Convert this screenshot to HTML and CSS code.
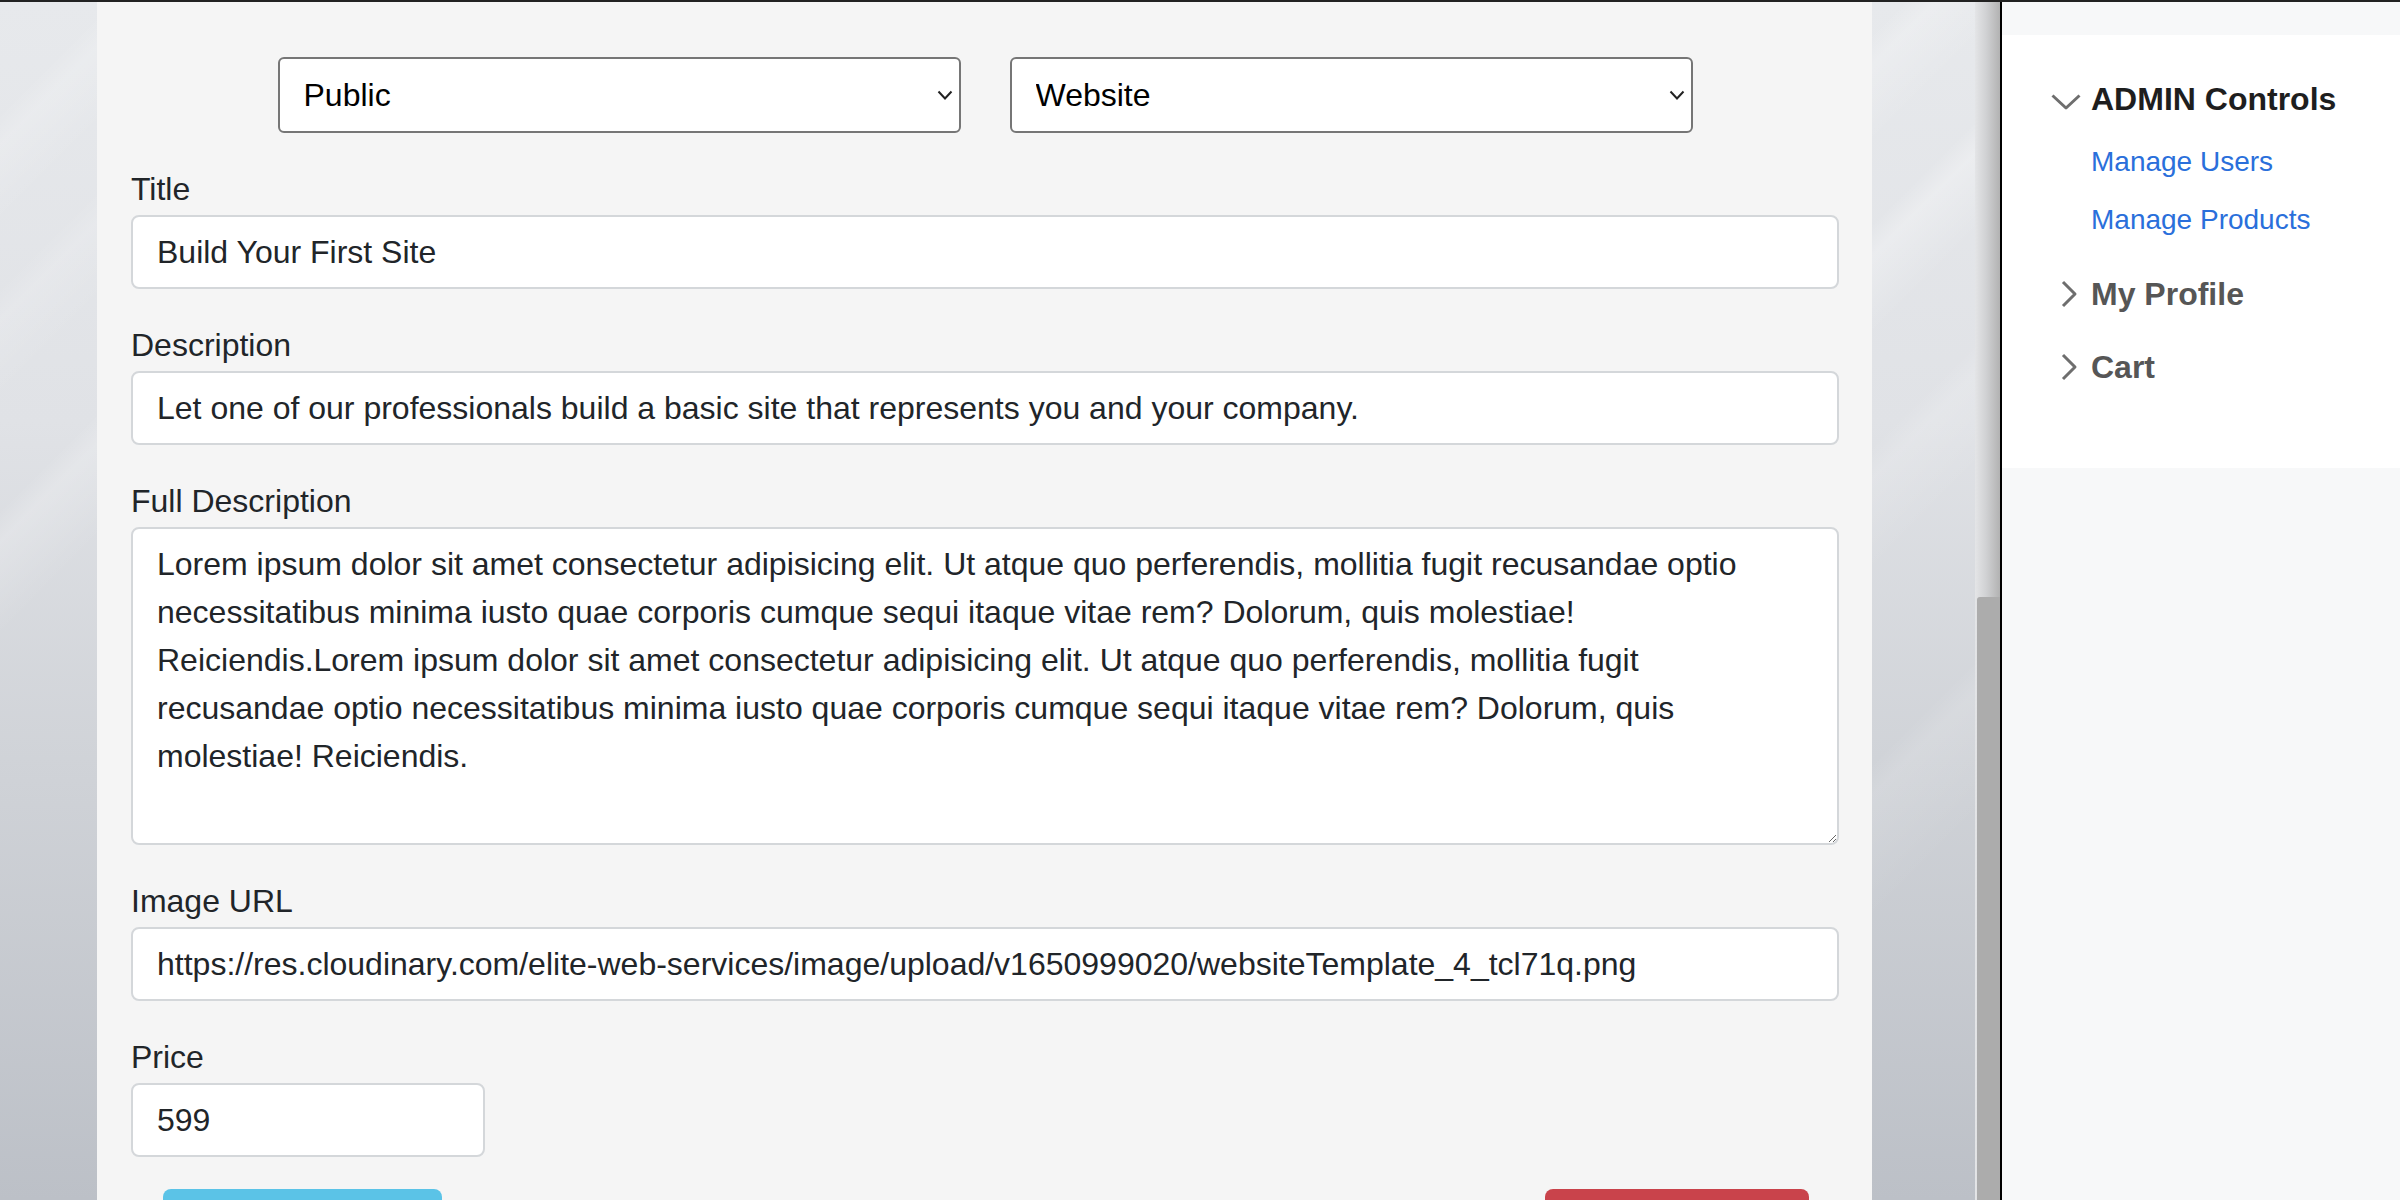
FILE: index.html
```html
<!DOCTYPE html>
<html lang="en">
<head>
<meta charset="utf-8">
<title>Edit Product</title>
<link rel="stylesheet" href="styles.css">
</head>
<body>
<div class="app">
  <main class="stage">
    <section class="panel">
      <form class="product-form">
        <div class="select-row">
          <div class="select-wrap">
            <select class="select">
              <option>Public</option>
              <option>Private</option>
            </select>
            <svg class="select-chevron" viewBox="0 0 16 10"><path d="M1.5 1.5 L8 8.5 L14.5 1.5" fill="none" stroke="#222" stroke-width="2"/></svg>
          </div>
          <div class="select-wrap">
            <select class="select">
              <option>Website</option>
              <option>Hosting</option>
            </select>
            <svg class="select-chevron" viewBox="0 0 16 10"><path d="M1.5 1.5 L8 8.5 L14.5 1.5" fill="none" stroke="#222" stroke-width="2"/></svg>
          </div>
        </div>

        <div class="field">
          <label class="field-label" for="title">Title</label>
          <input class="form-control" id="title" type="text" value="Build Your First Site">
        </div>

        <div class="field">
          <label class="field-label" for="desc">Description</label>
          <input class="form-control" id="desc" type="text" value="Let one of our professionals build a basic site that represents you and your company.">
        </div>

        <div class="field">
          <label class="field-label" for="full">Full Description</label>
          <textarea class="form-control form-textarea" id="full">Lorem ipsum dolor sit amet consectetur adipisicing elit. Ut atque quo perferendis, mollitia fugit recusandae optio necessitatibus minima iusto quae corporis cumque sequi itaque vitae rem? Dolorum, quis molestiae! Reiciendis.Lorem ipsum dolor sit amet consectetur adipisicing elit. Ut atque quo perferendis, mollitia fugit recusandae optio necessitatibus minima iusto quae corporis cumque sequi itaque vitae rem? Dolorum, quis molestiae! Reiciendis.</textarea>
        </div>

        <div class="field">
          <label class="field-label" for="img">Image URL</label>
          <input class="form-control" id="img" type="text" value="https://res.cloudinary.com/elite-web-services/image/upload/v1650999020/websiteTemplate_4_tcl71q.png">
        </div>

        <div class="field">
          <label class="field-label" for="price">Price</label>
          <input class="form-control form-price" id="price" type="text" value="599">
        </div>

        <div class="actions">
          <button class="btn btn-info" type="button" aria-label="Save"></button>
          <button class="btn btn-danger" type="button" aria-label="Delete"></button>
        </div>
      </form>
    </section>
  </main>

  <div class="scrollbar"><div class="scrollbar-thumb"></div></div>

  <aside class="sidebar">
    <nav class="sidebar-nav">
      <div class="nav-group">
        <div class="nav-toggle is-open">
          <svg class="chev" viewBox="0 0 32 32"><path d="M2.5 12.5 L16 25 L29.5 12.5" fill="none" stroke="#6e6e6e" stroke-width="3" stroke-linejoin="round"/></svg>
          <span>ADMIN Controls</span>
        </div>
        <ul class="nav-links">
          <li><a class="nav-link" href="#">Manage Users</a></li>
          <li><a class="nav-link" href="#">Manage Products</a></li>
        </ul>
      </div>
      <div class="nav-group nav-group-closed">
        <div class="nav-toggle">
          <svg class="chev" viewBox="0 0 32 32"><path d="M13 4 L25 16 L13 28" fill="none" stroke="#6e6e6e" stroke-width="3" stroke-linejoin="round"/></svg>
          <span>My Profile</span>
        </div>
      </div>
      <div class="nav-group nav-group-closed">
        <div class="nav-toggle">
          <svg class="chev" viewBox="0 0 32 32"><path d="M13 4 L25 16 L13 28" fill="none" stroke="#6e6e6e" stroke-width="3" stroke-linejoin="round"/></svg>
          <span>Cart</span>
        </div>
      </div>
    </nav>
  </aside>
</div>
</body>
</html>
```

FILE: styles.css
```css
* {
  box-sizing: border-box;
}

html,
body {
  margin: 0;
  height: 1200px;
  overflow: hidden;
}

body {
  font-family: "Liberation Sans", Arial, Helvetica, sans-serif;
  color: #212529;
  background: #f7f8f9;
  border-top: 2px solid #222;
}

.app {
  display: flex;
  height: 1198px;
}

/* silver backdrop around the form */
.stage {
  flex: none;
  width: 1975px;
  display: flex;
  padding: 0 103px 0 97px;
  background:
    linear-gradient(135deg,
      rgba(255,255,255,0) 0%,
      rgba(255,255,255,0) 3.5%,
      rgba(255,255,255,.18) 4.5%,
      rgba(255,255,255,0) 7%,
      rgba(255,255,255,0) 9%,
      rgba(255,255,255,.14) 10%,
      rgba(255,255,255,0) 12.5%,
      rgba(255,255,255,0) 16%,
      rgba(255,255,255,.2) 17%,
      rgba(255,255,255,0) 20%,
      rgba(255,255,255,0) 60%,
      rgba(255,255,255,.22) 61%,
      rgba(255,255,255,0) 63.5%,
      rgba(255,255,255,0) 66%,
      rgba(255,255,255,.28) 67%,
      rgba(255,255,255,0) 69.5%,
      rgba(255,255,255,0) 73%,
      rgba(255,255,255,.15) 74%,
      rgba(255,255,255,0) 77%,
      rgba(255,255,255,0) 83%,
      rgba(255,255,255,.12) 84%,
      rgba(255,255,255,0) 88%,
      rgba(255,255,255,0) 100%),
    linear-gradient(180deg, #e7e9ec 0%, #e0e2e6 35%, #cfd2d7 65%, #bcc0c7 100%);
}

.panel {
  flex: 1;
  background: #f5f5f5;
  padding: 55px 33px 0 34px;
}

.select-row {
  display: flex;
  justify-content: center;
  gap: 49px;
  margin-bottom: 32px;
}

.select-wrap {
  position: relative;
  width: 683px;
}

.select {
  -webkit-appearance: none;
  appearance: none;
  display: block;
  width: 100%;
  height: 76px;
  padding: 0 48px 0 24px;
  border: 2px solid #767676;
  border-radius: 6px;
  background: #fff;
  font-family: "Liberation Sans", Arial, Helvetica, sans-serif;
  font-size: 32px;
  color: #000;
}

.select-chevron {
  position: absolute;
  right: 8px;
  top: 33px;
  width: 16px;
  height: 10px;
  pointer-events: none;
}

.field {
  margin-bottom: 32px;
}

.field-label {
  display: block;
  font-size: 32px;
  line-height: 48px;
  margin-bottom: 2px;
  color: #212529;
}

.form-control {
  display: block;
  width: 100%;
  height: 74px;
  padding: 0 24px;
  border: 2px solid #d4d7da;
  border-radius: 8px;
  background: #fff;
  font-family: "Liberation Sans", Arial, Helvetica, sans-serif;
  font-size: 32px;
  color: #212529;
  outline: none;
}

.form-textarea {
  height: 318px;
  padding: 11px 24px;
  line-height: 48px;
  resize: vertical;
  overflow: hidden;
}

.form-price {
  width: 354px;
}

.actions {
  display: flex;
  justify-content: space-between;
  padding: 0 30px 0 32px;
  margin-top: 1px;
}

.btn {
  height: 76px;
  padding: 0;
  border: 0;
  border-radius: 8px;
}

.btn-info {
  width: 279px;
  background: #5bc3e7;
}

.btn-danger {
  width: 264px;
  background: #c9434b;
}

/* scrollbar strip */
.scrollbar {
  flex: none;
  width: 25px;
  display: flex;
  flex-direction: column;
  background: linear-gradient(to right, #e4e5e7 0%, #d0d1d3 45%, #b2b2b2 100%);
}

.scrollbar-thumb {
  flex: 1;
  margin-top: 595px;
  margin-left: 2px;
  background: #acacac;
  border-radius: 3px 0 0 0;
}

/* sidebar */
.sidebar {
  flex: 1;
  border-left: 2px solid #000;
  background: #f7f8f9;
  padding-top: 33px;
}

.sidebar-nav {
  background: #fff;
  height: 433px;
  padding: 40px 0 0 48px;
}

.nav-toggle {
  display: flex;
  align-items: center;
  font-size: 32px;
  font-weight: 700;
  line-height: 48px;
  color: #565656;
}

.nav-toggle.is-open {
  color: #1e1e1e;
}

.chev {
  flex: none;
  width: 32px;
  height: 32px;
  margin-right: 9px;
}

.nav-links {
  list-style: none;
  margin: 10px 0 21px;
  padding: 0 0 0 41px;
}

.nav-link {
  display: block;
  font-size: 28px;
  line-height: 58px;
  color: #2a6fdb;
  text-decoration: none;
}

.nav-group-closed + .nav-group-closed {
  margin-top: 25px;
}
```
